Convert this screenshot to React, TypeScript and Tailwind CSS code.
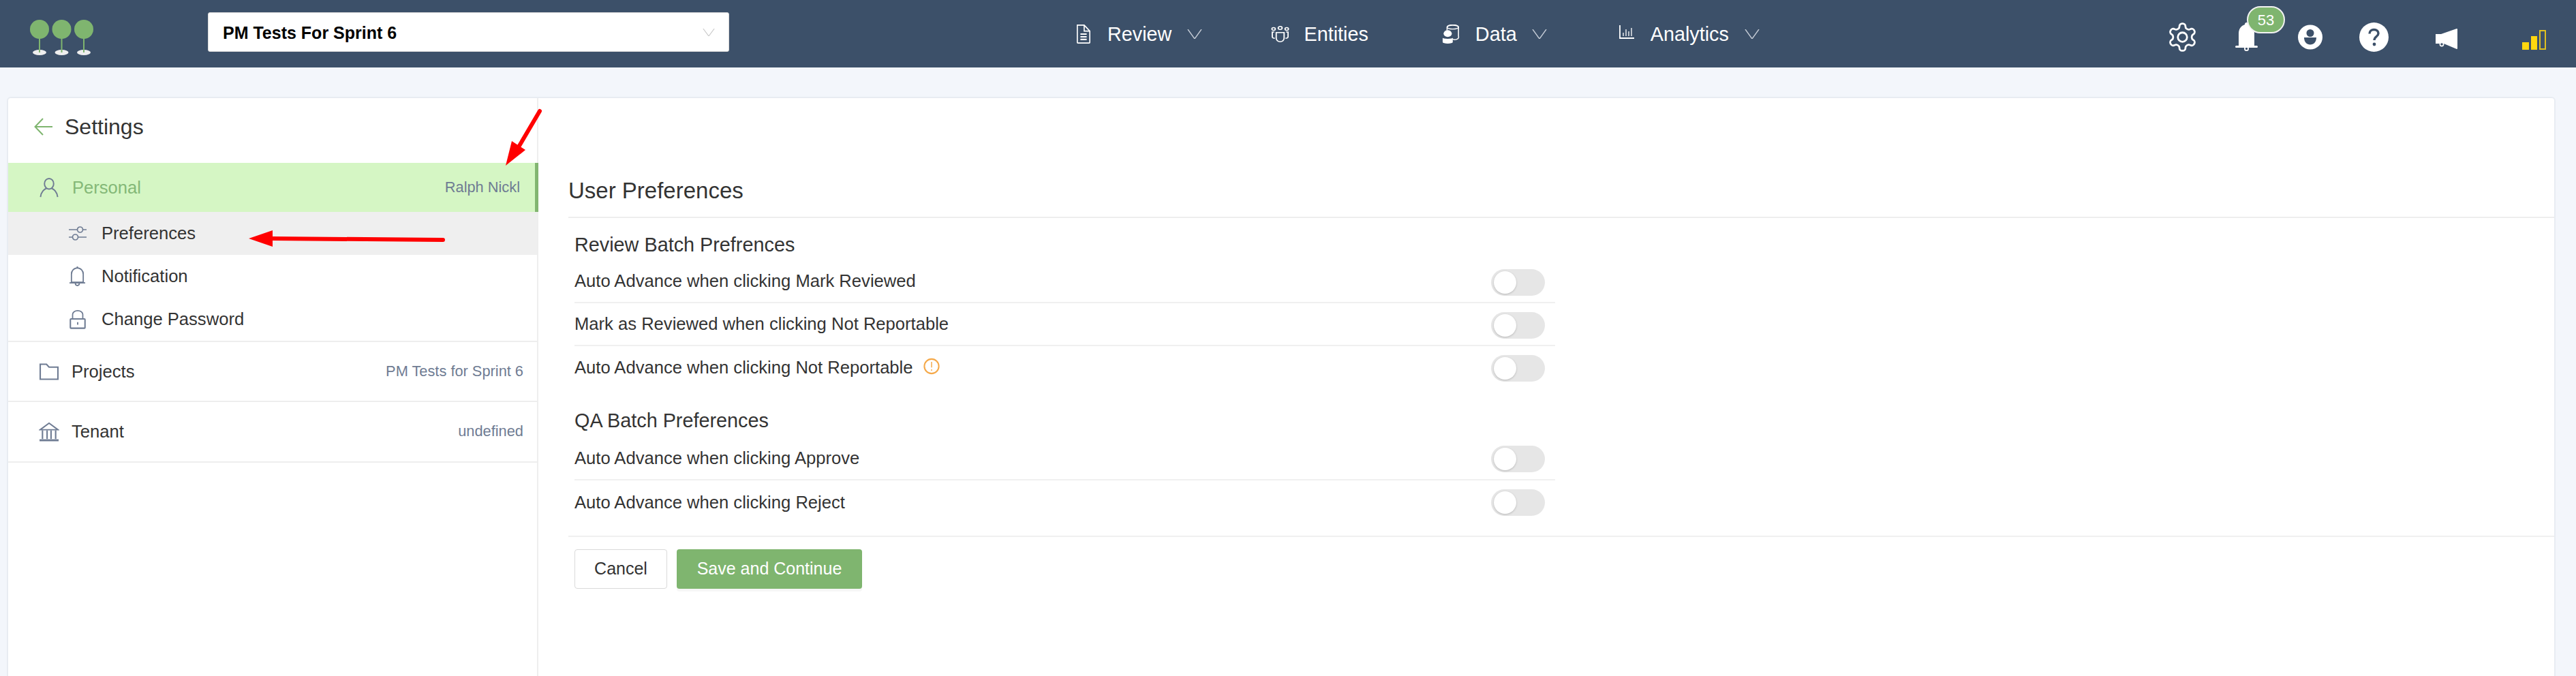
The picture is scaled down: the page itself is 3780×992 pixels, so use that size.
import React from "react";

const Chev = ({ c = "#c5ccd6", w = 22, h = 14 }: { c?: string; w?: number; h?: number }) => (
  <svg width={w} height={h} viewBox="0 0 22 14" fill="none" stroke={c} strokeWidth="1.4" preserveAspectRatio="none"><path d="M1 0 L11 14 L21 0" /></svg>
);

const Logo = () => (
  <svg width="93" height="52" viewBox="0 0 93 52" className="shrink-0">
    {[14, 46.5, 79].map((x) => (
      <g key={x}>
        <ellipse cx={x} cy={48} rx="10" ry="4" fill="#eeeeee" />
        <rect x={x - 1} y={26} width="2" height="22" fill="#7fb56f" />
        <circle cx={x} cy={14} r="14" fill="#7fb56f" />
      </g>
    ))}
  </svg>
);

const NavItem = ({ icon, label, chevron, gap, chevGap }: { icon: React.ReactNode; label: string; chevron?: boolean; gap: string; chevGap?: string }) => (
  <div className={`flex items-center ${gap}`}>
    {icon}
    <span className="text-[28.8px] text-white leading-[36px]">{label}</span>
    {chevron && <span className={`${chevGap} -ml-[1px] flex`}><Chev /></span>}
  </div>
);

const DocIcon = () => (
  <svg width="22" height="28" viewBox="0 0 24 32" fill="none" stroke="#fff" strokeWidth="1.8" preserveAspectRatio="none">
    <path d="M2 1 H13 L22 11 V30 a1 1 0 0 1 -1 1 H3 a1 1 0 0 1 -1 -1 Z" />
    <path d="M13 1 V11 H22" />
    <path d="M7 16 H17 M7 20.5 H17 M7 25 H17" strokeWidth="2.4" />
  </svg>
);
const PeopleIcon = () => (
  <svg width="27" height="24" viewBox="0 0 28 32" fill="none" stroke="#fff" strokeWidth="1.9" preserveAspectRatio="none">
    <circle cx="14" cy="4" r="3" /><circle cx="4" cy="6" r="2.6" /><circle cx="24" cy="6" r="2.6" />
    <path d="M8 13 H20 V24 a6 7 0 0 1 -12 0 Z" />
    <path d="M5 12 H2 V21 a3 3 0 0 0 4 3 M23 12 H26 V21 a3 3 0 0 1 -4 3" />
  </svg>
);
const DataIcon = () => (
  <svg width="26" height="28" viewBox="0 0 28 36" fill="none" stroke="#fff" strokeWidth="1.7" preserveAspectRatio="none">
    <path d="M8 11 V5 a8 4 0 0 1 18 0 V22 a6 5 0 0 1 -10 5" />
    <ellipse cx="17" cy="5" rx="9" ry="3.5" />
    <circle cx="9" cy="17" r="6.5" fill="#fff" stroke="none" />
    <path d="M1 25 a8 2 0 0 0 16 0 V33 a8 3 0 0 1 -16 0 Z" fill="#fff" stroke="none" />
  </svg>
);
const ChartIcon = () => (
  <svg width="22" height="20" viewBox="0 0 22 20" fill="none" stroke="#fff" strokeWidth="1.3" className="-mt-[5px]">
    <path d="M1 0 V19 H22" strokeWidth="1.8" />
    <path d="M6 11 V16 M10 6 V16 M14 9 V16 M18 4 V16" />
  </svg>
);

const Gear = () => (
  <svg width="41" height="43" viewBox="2.2 1.2 19.6 21.6" fill="none" stroke="#fff" strokeWidth="1.4" strokeLinejoin="round">
    <path d="M12.22 2h-.44a2 2 0 0 0-2 2v.18a2 2 0 0 1-1 1.73l-.43.25a2 2 0 0 1-2 0l-.15-.08a2 2 0 0 0-2.73.73l-.22.38a2 2 0 0 0 .73 2.73l.15.1a2 2 0 0 1 1 1.72v.51a2 2 0 0 1-1 1.74l-.15.09a2 2 0 0 0-.73 2.73l.22.38a2 2 0 0 0 2.73.73l.15-.08a2 2 0 0 1 2 0l.43.25a2 2 0 0 1 1 1.73V20a2 2 0 0 0 2 2h.44a2 2 0 0 0 2-2v-.18a2 2 0 0 1 1-1.73l.43-.25a2 2 0 0 1 2 0l.15.08a2 2 0 0 0 2.73-.73l.22-.39a2 2 0 0 0-.73-2.73l-.15-.08a2 2 0 0 1-1-1.74v-.5a2 2 0 0 1 1-1.74l.15-.09a2 2 0 0 0 .73-2.73l-.22-.38a2 2 0 0 0-2.73-.73l-.15.08a2 2 0 0 1-2 0l-.43-.25a2 2 0 0 1-1-1.73V4a2 2 0 0 0-2-2z" />
    <circle cx="12" cy="12" r="3.4" />
  </svg>
);
const BellSolid = () => (
  <svg width="33" height="42" viewBox="0 0 33 42" className="block">
    <path d="M16.5 0 a2.5 2.5 0 0 1 2.5 3 C25 5 28 10 28 16 V34 H31.5 a1.5 1.5 0 0 1 0 3 H1.5 a1.5 1.5 0 0 1 0 -3 H5 V16 C5 10 8 5 14 3 A2.5 2.5 0 0 1 16.5 0 Z" fill="#fff" />
    <circle cx="16.5" cy="38.5" r="2.6" fill="none" stroke="#fff" strokeWidth="1.8" />
  </svg>
);
const UserCircle = () => (
  <svg width="36" height="37" viewBox="0 0 36 36" className="block">
    <circle cx="18" cy="18" r="18" fill="#fff" />
    <circle cx="18" cy="12" r="5.5" fill="#3c5069" />
    <path d="M9 18.5 H27 C27 25 23 29 18 29 C13 29 9 25 9 18.5 Z" fill="#3c5069" />
  </svg>
);
const Help = () => (
  <svg width="43" height="43" viewBox="0 0 43 43" className="block">
    <circle cx="21.5" cy="21.5" r="21.5" fill="#fff" />
    <path d="M15 16.5 C15 12.5 18 10.5 21.5 10.5 C25.5 10.5 28 13 28 16 C28 20.5 22 20.5 22 26" fill="none" stroke="#3c5069" strokeWidth="3.4" />
    <circle cx="22" cy="32" r="2.4" fill="#3c5069" />
  </svg>
);
const Horn = () => (
  <svg width="32" height="30" viewBox="0 0 32 30" className="block">
    <path d="M0 8 H8 L31 0 a1 1 0 0 1 1 1 V29 a1 1 0 0 1 -1 1 L12 22 H0 Z" fill="#fff" />
    <circle cx="9" cy="23" r="2.6" fill="#3c5069" stroke="#fff" strokeWidth="1.6" />
  </svg>
);
const Signal = () => (
  <div className="flex items-end gap-[3px] h-[29px]">
    <div className="w-[10px] h-[11px] bg-[#ffd70f]" />
    <div className="w-[9px] h-[20px] bg-[#ffd70f]" />
    <div className="w-[10px] h-[29px] border-2 border-[#e0c020]" />
  </div>
);

const G = "#6f7c93";
const PersonIcon = () => (
  <svg width="28" height="29" viewBox="0 0 28 30" fill="none" stroke={G} strokeWidth="2">
    <ellipse cx="14" cy="9" rx="7" ry="8" />
    <path d="M1 29 C2 21 7 17 10 16 M27 29 C26 21 21 17 18 16" />
  </svg>
);
const SliderIcon = () => (
  <svg width="26" height="21" viewBox="0 0 26 21" fill="none" stroke={G} strokeWidth="1.7">
    <path d="M0 5 H12 M21 5 H26 M0 16 H5 M14 16 H26" />
    <circle cx="16.5" cy="5" r="4" /><circle cx="9.5" cy="16" r="4" />
  </svg>
);
const BellIcon = () => (
  <svg width="25" height="31" viewBox="0 0 26 32" fill="none" stroke={G} strokeWidth="1.9">
    <path d="M13 1 V3 C7 4 4 8 4 13 V25 H22 V13 C22 8 19 4 13 3" />
    <path d="M1 26 H25" />
    <path d="M10 27 a3 3 0 0 0 6 0" />
  </svg>
);
const LockIcon = () => (
  <svg width="26" height="28" viewBox="0 0 26 30" fill="none" stroke={G} strokeWidth="1.9">
    <path d="M5 14 V7 a8 6 0 0 1 16 0 V14" />
    <rect x="1.5" y="14" width="23" height="14.5" rx="1" strokeWidth="2.2" />
    <path d="M13 19 V23" strokeWidth="2" />
  </svg>
);
const FolderIcon = () => (
  <svg width="30" height="25" viewBox="0 0 30 26" fill="none" stroke={G} strokeWidth="2.2">
    <path d="M1.5 1.5 H11 L15 6 H28.5 V24.5 H1.5 Z" />
  </svg>
);
const BankIcon = () => (
  <svg width="30" height="29" viewBox="0 0 30 30" fill="none" stroke={G} strokeWidth="2">
    <path d="M1.5 12 L15 2 L28.5 12 Z" />
    <path d="M5 13 V26 M12 13 V26 M18 13 V26 M25 13 V26" strokeWidth="2.2" />
    <path d="M0.5 28 H29.5" strokeWidth="3" />
  </svg>
);

const Toggle = ({ up }: { up?: boolean }) => (
  <div className={`w-[79px] h-[39px] rounded-full bg-[#e6e6e6] flex items-center pl-[4px] shrink-0 ${up ? "mt-[1px]" : "mt-[4px]"}`}>
    <div className="w-[33px] h-[33px] rounded-full bg-white shadow-[0_1px_3px_rgba(0,0,0,0.2)]" />
  </div>
);

const Row = ({ label, border, extra, h, up }: { label: string; border?: boolean; extra?: React.ReactNode; h: string; up?: boolean }) => (
  <div className={`w-[1439px] flex items-center ${h} ${border ? "border-b-2 border-[#f0f0f0]" : ""} ml-[9px]`}>
    <div className="w-[1345px] flex items-center shrink-0 text-[25.6px] text-[#333333]">
      {label}
      {extra}
    </div>
    <Toggle up={up} />
  </div>
);

const Warn = () => (
  <svg width="24" height="25" viewBox="0 0 26 26" fill="none" className="ml-[15px] -mt-[3px]">
    <circle cx="13" cy="13" r="11.5" stroke="#f5a94a" strokeWidth="2.2" />
    <path d="M13 6 V15 M13 18 V20" stroke="#f5a94a" strokeWidth="1.6" />
  </svg>
);

const SubItem = ({ icon, label, active }: { icon: React.ReactNode; label: string; active?: boolean }) => (
  <div className={`flex items-center h-[63px] pl-[89px] ${active ? "bg-[#efefef]" : ""}`}>
    <span className="w-[48px] flex">{icon}</span>
    <span className="text-[25.6px] text-[#333333]">{label}</span>
  </div>
);

const SideRow = ({ icon, label, value, h }: { icon: React.ReactNode; label: string; value: string; h: string }) => (
  <div className={`flex items-center ${h} pl-[45px] pr-[20px] border-b-2 border-[#eeeeee]`}>
    <span className="w-[48px] flex">{icon}</span>
    <span className="text-[25.6px] text-[#333333]">{label}</span>
    <span className="ml-auto text-[21.8px] text-[#6f7c93]">{value}</span>
  </div>
);

export default function App() {
  return (
    <div className="relative w-[3780px] h-[992px] overflow-hidden bg-[#f3f6fb] font-['Liberation_Sans',Arial,sans-serif]">
      <header className="h-[99px] bg-[#3c5069] flex items-center relative">
        <div className="pl-[44px] w-[305px] shrink-0 mt-[11px]"><Logo /></div>
        <div className="w-[765px] h-[58px] -mt-[5px] bg-white rounded-[3px] border border-[#d9d9d9] flex items-center justify-between pl-[21px] pr-[20px] shrink-0">
          <span className="text-[25px] font-bold text-black mt-[3px]">PM Tests For Sprint 6</span>
          <Chev c="#c8c8c8" w={18} h={11} />
        </div>
        <nav className="flex items-center ml-[509px]">
          <NavItem icon={<DocIcon />} label="Review" chevron gap="gap-[24px]" />
          <div className="ml-[101px]"><NavItem icon={<PeopleIcon />} label="Entities" gap="gap-[21px]" /></div>
          <div className="ml-[108px]"><NavItem icon={<DataIcon />} label="Data" chevron gap="gap-[23px]" /></div>
          <div className="ml-[106px]"><NavItem icon={<ChartIcon />} label="Analytics" chevron gap="gap-[24px]" /></div>
        </nav>
        <div className="ml-auto flex items-center pr-[44px] mt-[9px]">
          <Gear />
          <div className="relative ml-[57px]">
            <BellSolid />
            <div className="absolute -top-[24px] left-[17px] w-[56px] h-[40px] rounded-full bg-[#7fb56f] border-2 border-[#f2f2f2] flex items-center justify-center text-[22px] text-white">53</div>
          </div>
          <div className="ml-[59px]"><UserCircle /></div>
          <div className="ml-[54px]"><Help /></div>
          <div className="ml-[69px] mt-[6px]"><Horn /></div>
          <div className="ml-[95px] mt-[8px]"><Signal /></div>
        </div>
      </header>

      <main className="ml-[12px] mr-[32px] mt-[45px] h-[860px] bg-white rounded-[4px] shadow-[0_0_0_2px_#e8ecf2] flex">
        <aside className="w-[778px] shrink-0 border-r-2 border-[#eeeeee] h-full">
          <div className="h-[95px] flex items-center pl-[38px] pb-[12px]">
            <svg width="27" height="26" viewBox="0 0 27 26" fill="none" stroke="#7fb56f" strokeWidth="2"><path d="M13 1 L1.5 13 L13 25 M2 13 H27" /></svg>
            <span className="ml-[18px] text-[32px] text-[#333333]">Settings</span>
          </div>
          <div className="h-[72px] bg-[#d5f6c4] border-r-[5px] border-[#82b571] -mr-[2px] flex items-center pl-[46px] pr-[22px]">
            <span className="w-[48px] flex"><PersonIcon /></span>
            <span className="text-[25.6px] text-[#84b877]">Personal</span>
            <span className="ml-auto text-[21.8px] text-[#6f7c93]">Ralph Nickl</span>
          </div>
          <SubItem icon={<SliderIcon />} label="Preferences" active />
          <SubItem icon={<BellIcon />} label="Notification" />
          <div className="border-b-2 border-[#eeeeee]"><SubItem icon={<LockIcon />} label="Change Password" /></div>
          <SideRow icon={<FolderIcon />} label="Projects" value="PM Tests for Sprint 6" h="h-[88px]" />
          <SideRow icon={<BankIcon />} label="Tenant" value="undefined" h="h-[89px]" />
        </aside>
        <section className="flex-1 pl-[44px]">
          <div className="h-[176px] flex items-end pb-[18px] border-b-2 border-[#eeeeee]">
            <h1 className="text-[33px] leading-[40px] text-[#333333] font-normal">User Preferences</h1>
          </div>
          <div className="h-[62px] pl-[9px] pt-[18px] flex items-center text-[28.8px] text-[#333333]">Review Batch Prefrences</div>
          <Row label="Auto Advance when clicking Mark Reviewed" border h="h-[63px]" />
          <Row label="Mark as Reviewed when clicking Not Reportable" border h="h-[63px]" />
          <Row label="Auto Advance when clicking Not Reportable" extra={<Warn />} h="h-[63px]" up />
          <div className="h-[71px] pl-[9px] pt-[22px] flex items-center text-[28.8px] text-[#333333]">QA Batch Preferences</div>
          <Row label="Auto Advance when clicking Approve" border h="h-[63px]" up />
          <Row label="Auto Advance when clicking Reject" h="h-[64px]" up />
          <div className="mt-[17px] border-t-2 border-[#f0f0f0] pl-[9px] pt-[18px] flex gap-[14px]">
            <button className="w-[136px] h-[58px] border border-[#d9d9d9] rounded-[4px] bg-white text-[25px] text-[#333333]">Cancel</button>
            <button className="w-[272px] h-[58px] rounded-[4px] bg-[#7fb56f] text-[25px] text-white shadow-[0_4px_0_#f6f6f6]">Save and Continue</button>
          </div>
        </section>
      </main>

      <svg className="absolute left-[735px] top-[155px]" width="70" height="95" viewBox="0 0 70 95" fill="#ff0000">
        <path d="M57 8 L27 59" stroke="#ff0000" strokeWidth="6" strokeLinecap="round" />
        <path d="M7 88 L16 52 L36 65 Z" />
      </svg>
      <svg className="absolute left-[360px] top-[330px]" width="300" height="40" viewBox="0 0 300 40" fill="#ff0000">
        <path d="M40 20 L290 22" stroke="#ff0000" strokeWidth="6" strokeLinecap="round" />
        <path d="M5 20 L40 8 V32 Z" />
      </svg>
    </div>
  );
}
